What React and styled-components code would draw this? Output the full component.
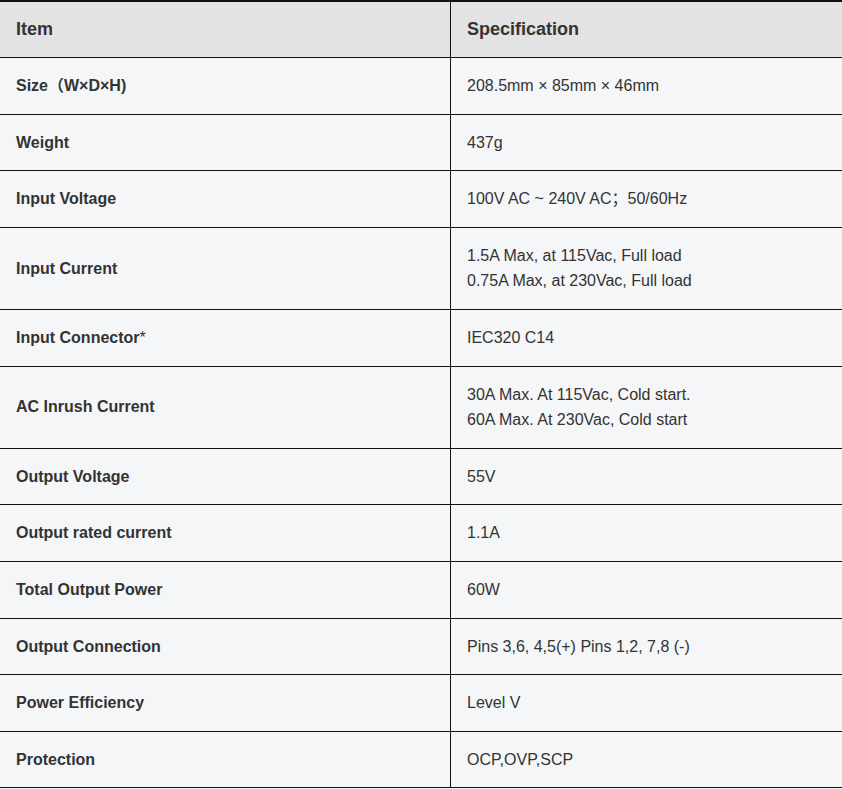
import React from "react";
import styled, { createGlobalStyle } from "styled-components";

const Global = createGlobalStyle`
  html, body { margin: 0; padding: 0; background: #f5f6f8; }
  body { font-family: "Liberation Sans", Arial, "Noto Sans CJK SC", sans-serif; }
`;

const Table = styled.table`
  width: 842px;
  border-collapse: collapse;
  border-top: 2px solid #111;
  background: #f5f6f8;
  color: #333;
  font-size: 16px;
`;

const HeadCell = styled.th`
  background: #e3e3e3;
  text-align: left;
  font-weight: bold;
  font-size: 18px;
  line-height: 25px;
  padding: 15px 15px 15px 16px;
  border-bottom: 1px solid #111;
  width: ${(p) => (p.$first ? "419px" : "auto")};
  border-right: ${(p) => (p.$first ? "1px solid #111" : "none")};
  color: #333;
`;

const Cell = styled.td`
  text-align: left;
  vertical-align: middle;
  line-height: 1.6;
  padding: 15px 15px 15px 16px;
  border-bottom: 1px solid #111;
  font-weight: ${(p) => (p.$label ? "bold" : "normal")};
  border-right: ${(p) => (p.$label ? "1px solid #111" : "none")};
  color: #333;
`;

const Star = styled.span`
  font-weight: normal;
`;

const rows = [
  ["Size（W×D×H)", ["208.5mm × 85mm × 46mm"]],
  ["Weight", ["437g"]],
  ["Input Voltage", ["100V AC ~ 240V AC；50/60Hz"]],
  ["Input Current", ["1.5A Max, at 115Vac, Full load", "0.75A Max, at 230Vac, Full load"]],
  ["Input Connector", ["IEC320 C14"], true],
  ["AC Inrush Current", ["30A Max. At 115Vac, Cold start.", "60A Max. At 230Vac, Cold start"]],
  ["Output Voltage", ["55V"]],
  ["Output rated current", ["1.1A"]],
  ["Total Output Power", ["60W"]],
  ["Output Connection", ["Pins 3,6, 4,5(+) Pins 1,2, 7,8 (-)"]],
  ["Power Efficiency", ["Level V"]],
  ["Protection", ["OCP,OVP,SCP"]],
];

export default function App() {
  return (
    <>
      <Global />
      <Table>
        <thead>
          <tr>
            <HeadCell $first>Item</HeadCell>
            <HeadCell>Specification</HeadCell>
          </tr>
        </thead>
        <tbody>
          {rows.map(([label, lines, star]) => (
            <tr key={label}>
              <Cell $label>
                {label}
                {star && <Star>*</Star>}
              </Cell>
              <Cell>
                {lines.map((l, i) => (
                  <React.Fragment key={i}>
                    {i > 0 && <br />}
                    {l}
                  </React.Fragment>
                ))}
              </Cell>
            </tr>
          ))}
        </tbody>
      </Table>
    </>
  );
}
